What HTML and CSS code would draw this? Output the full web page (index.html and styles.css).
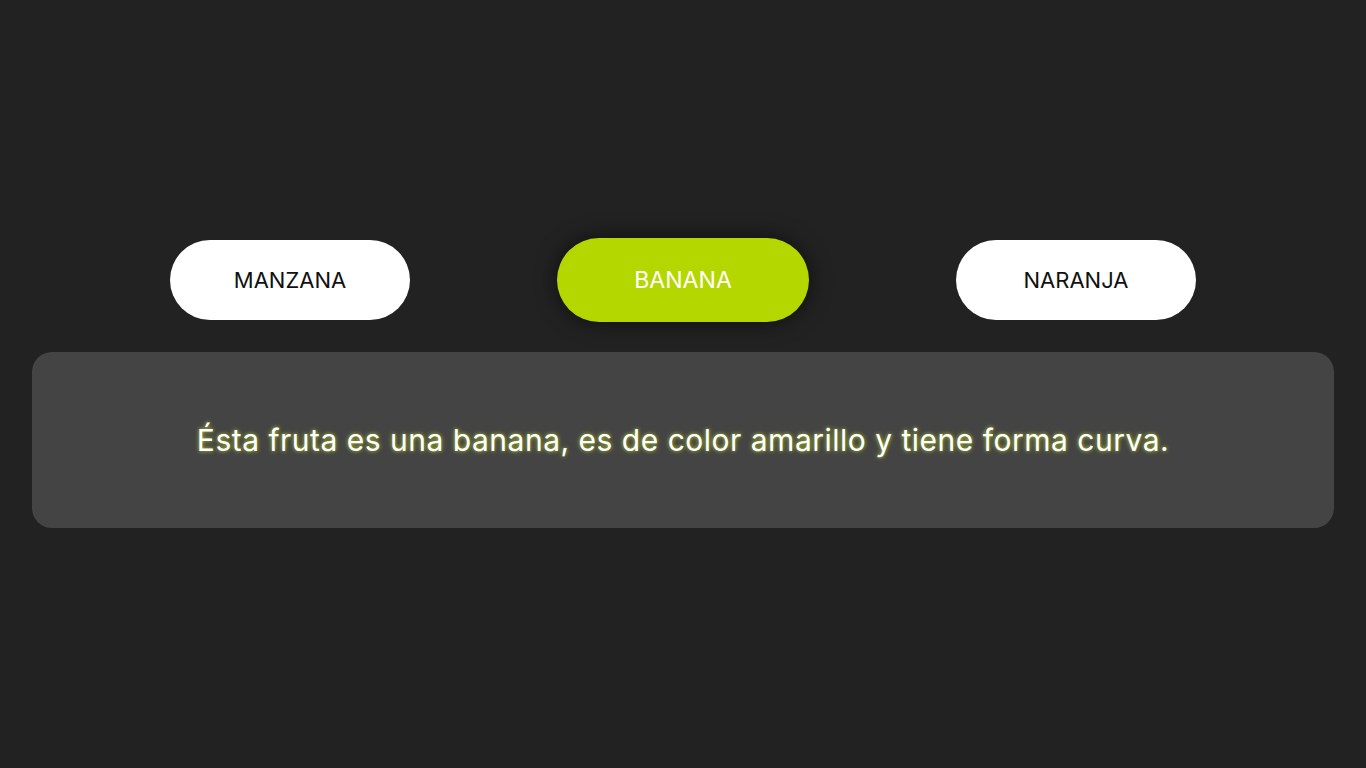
FILE: index.html
```html
<!DOCTYPE html>
<html lang="es">
<head>
<meta charset="utf-8">
<title>Frutas</title>
<link rel="stylesheet" href="styles.css">
</head>
<body>
<main class="page">
  <nav class="tabs">
    <button class="tab">MANZANA</button>
    <button class="tab tab--active">BANANA</button>
    <button class="tab">NARANJA</button>
  </nav>
  <section class="panel">
    <p class="panel__text">Ésta fruta es una banana, es de color amarillo y tiene forma curva.</p>
  </section>
</main>
</body>
</html>
```
FILE: styles.css
```css
html, body {
  margin: 0;
  padding: 0;
  background: #222222;
  height: 100%;
}
body {
  font-family: Inter, "Noto Sans", "Liberation Sans", sans-serif;
}
.page {
  padding: 240px 32px 0;
  display: flex;
  flex-direction: column;
  gap: 32px;
}
.tabs {
  display: flex;
  justify-content: center;
  gap: 153px;
}
.tab {
  width: 240px;
  height: 80px;
  border: none;
  border-radius: 40px;
  background: #ffffff;
  color: #111111;
  font-family: inherit;
  font-size: 22px;
  font-weight: 400;
  padding: 0;
  cursor: pointer;
}
.tab--active {
  background: #b5d700;
  color: #ffffff;
  transform: scale(1.05);
  box-shadow: 0 0 20px rgba(0, 0, 0, 0.6);
}
.panel {
  height: 176px;
  background: #444444;
  border-radius: 20px;
  display: flex;
  align-items: center;
  justify-content: center;
}
.panel__text {
  margin: 0;
  color: #ffffff;
  font-size: 30px;
  letter-spacing: 0.5px;
  text-shadow: 0 0 4px rgba(190, 215, 40, 0.95);
}
```
